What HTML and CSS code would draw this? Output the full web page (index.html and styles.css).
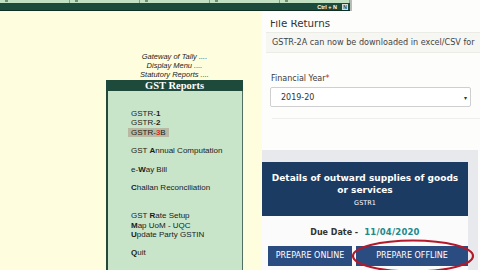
FILE: index.html
```html
<!DOCTYPE html>
<html>
<head>
<meta charset="utf-8">
<link rel="stylesheet" href="styles.css">
</head>
<body>
<div class="screen">
  <div class="tally">
    <div class="menu-col">
      <div class="crumbs">
        <div>Gateway of Tally ....</div>
        <div>Display Menu ....</div>
        <div>Statutory Reports ....</div>
      </div>
      <div class="gst-box">
        <div class="gst-head">GST Reports</div>
        <div class="gst-items">
          <div>GSTR-<b>1</b></div>
          <div>GSTR-<b>2</b></div>
          <div><span class="sel">GSTR-<span class="hot">3</span>B</span></div>
          <div class="gap"></div>
          <div>GST <b>A</b>nnual Computation</div>
          <div class="gap"></div>
          <div>e-<b>W</b>ay Bill</div>
          <div class="gap"></div>
          <div><b>C</b>hallan Reconciliation</div>
          <div class="gap"></div>
          <div class="gap"></div>
          <div>GST <b>R</b>ate Setup</div>
          <div><b>M</b>ap UoM - UQC</div>
          <div><b>U</b>pdate Party GSTIN</div>
          <div class="gap"></div>
          <div><b>Q</b>uit</div>
        </div>
      </div>
    </div>
  </div>

  <div class="portal">
    <div class="view">
      <h1 class="title">File Returns</h1>
      <div class="notice">GSTR-2A can now be downloaded in excel/CSV for</div>
      <div class="label">Financial Year<span class="req">*</span></div>
      <div class="select"><span>2019-20</span><span class="caret">&#9662;</span></div>
      <div class="rule"></div>
      <div class="tiles">
        <div class="card">
          <div class="card-head">
            <div class="card-title">Details of outward supplies of goods<br>or services</div>
            <div class="card-code">GSTR1</div>
          </div>
          <div class="card-body">
            <div class="due"><span class="due-l">Due Date -</span><span class="due-d">11/04/2020</span></div>
            <div class="btns">
              <div class="btn on">PREPARE ONLINE</div>
              <div class="btn off">PREPARE OFFLINE</div>
            </div>
          </div>
        </div>
      </div>
    </div>
  </div>

  <div class="tally-top">
    <div class="tabs">
      <div class="tab"><i></i></div>
      <div class="tab"><i></i></div>
      <div class="tab"><i></i></div>
      <div class="tab"><i></i></div>
      <div class="tab"><i></i></div>
    </div>
    <div class="bar"><span class="ctrl">Ctrl + N</span><span class="xbox">N</span></div>
  </div>

  <svg class="ring" width="130" height="40" viewBox="0 0 130 40">
    <ellipse cx="64" cy="22" rx="60" ry="15.5" fill="none" stroke="#b3192b" stroke-width="2.2"/>
  </svg>
</div>
</body>
</html>
```

FILE: styles.css
```css
* { box-sizing: border-box; margin: 0; padding: 0; }
html, body { width: 480px; height: 270px; overflow: hidden; background: #fff; }

.screen {
  position: relative;
  width: 480px;
  height: 270px;
  display: flex;
  overflow: hidden;
}

/* ---------- Tally ---------- */
.tally {
  width: 262px;
  height: 270px;
  background: #fefedf;
  padding-left: 106px;
  display: flex;
}
.menu-col {
  width: 137px;
  display: flex;
  flex-direction: column;
  padding-top: 52px;
}
.crumbs {
  font-family: "Liberation Sans", Arial, sans-serif;
  font-style: italic;
  font-size: 7.5px;
  line-height: 9.2px;
  color: #222;
  text-align: center;
}
.gst-box {
  flex: 1;
  background: #c9e5c9;
  border-left: 2px solid #24483a;
  border-right: 1px solid #51705f;
}
.gst-head {
  height: 11px;
  background: #1d4a3b;
  color: #fff;
  font-family: "Liberation Serif", "Times New Roman", serif;
  font-weight: bold;
  font-size: 10.5px;
  line-height: 11px;
  text-align: center;
  margin-left: -2px;
  margin-right: -1px;
}
.gst-items {
  padding: 18.4px 0 0 23px;
  font-family: "Liberation Sans", Arial, sans-serif;
  font-size: 8px;
  line-height: 9.3px;
  color: #1a1a1a;
}
.gst-items .gap { height: 9.3px; }
.gst-items b { font-weight: bold; }
.sel {
  display: inline-block;
  background: #b8b9a2;
  padding: 0 3px;
  margin-left: -3px;
}
.hot { color: #d3302a; font-weight: bold; }

/* ---------- Tally top bar ---------- */
.tally-top {
  position: absolute;
  left: 0;
  top: 0;
  width: 352px;
  height: 11px;
  border-right: 2px solid #b9bdb9;
}
.tabs {
  display: flex;
  height: 3px;
  background: #c2e0c2;
}
.tab {
  width: 70px;
  border-right: 1px solid #7f9f86;
  position: relative;
}
.tab i {
  position: absolute;
  left: 5px;
  top: 0;
  width: 3px;
  height: 2px;
  background: #6f8f77;
}
.bar {
  height: 8px;
  background: #1c4a3b;
  border-bottom: 1px solid #0f2f24;
  display: flex;
  justify-content: flex-end;
  align-items: center;
  padding-right: 2px;
  gap: 5px;
}
.ctrl {
  font-family: "Liberation Sans", Arial, sans-serif;
  font-weight: bold;
  font-size: 5.5px;
  line-height: 6px;
  color: #fff;
}
.xbox {
  width: 6px;
  height: 6px;
  background: #d8ddd8;
  color: #1c4a3b;
  font-family: "Liberation Sans", Arial, sans-serif;
  font-weight: bold;
  font-size: 5px;
  line-height: 6px;
  text-align: center;
}

/* ---------- Portal ---------- */
.portal {
  width: 218px;
  height: 270px;
  background: #fdfdfc;
  padding-top: 20px;
  font-family: "DejaVu Sans", Verdana, sans-serif;
}
.view {
  height: 250px;
  overflow: hidden;
}
.title {
  font-weight: normal;
  font-size: 10.3px;
  line-height: 12px;
  color: #333;
  margin: -3px 0 0 8px;
}
.notice {
  margin: 3px 0 0 4px;
  height: 21px;
  background: #f6f6f2;
  border-top: 1px solid #ecece6;
  border-bottom: 1px solid #ecece6;
  padding-left: 6px;
  font-size: 8.1px;
  line-height: 19px;
  color: #444;
  white-space: nowrap;
  overflow: hidden;
}
.label {
  margin: 21px 0 0 9px;
  font-size: 8px;
  line-height: 10px;
  color: #3a3a3a;
}
.req { color: #d0202a; }
.select {
  margin: 3px 0 0 8px;
  width: 201px;
  height: 20px;
  border: 1px solid #cfcfcf;
  border-radius: 2px;
  background: #fff;
  display: flex;
  justify-content: space-between;
  align-items: center;
  padding: 0 3px 0 10px;
  font-size: 8px;
  color: #333;
}
.caret { font-size: 6px; color: #333; }
.rule {
  margin: 11px 0 0 10px;
  height: 1px;
  background: #eeeeee;
}
.tiles {
  margin-top: 31px;
  width: 216px;
  height: 130px;
  background: #e7e9ec;
  padding-top: 12px;
}
.card {
  width: 206px;
  background: #fbfbfb;
  height: 120px;
}
.card-head {
  height: 54px;
  background: #1b3b63;
  color: #fff;
  text-align: center;
  padding-top: 10px;
}
.card-title {
  font-weight: bold;
  font-size: 9px;
  line-height: 12px;
}
.card-code {
  margin-top: 2px;
  font-size: 6.5px;
  line-height: 10px;
}
.card-body { padding-top: 10px; }
.due {
  display: flex;
  justify-content: center;
  align-items: baseline;
  gap: 6px;
  line-height: 12px;
  font-weight: bold;
}
.due-l { font-size: 8px; color: #333; }
.due-d { font-size: 8.5px; color: #23898a; letter-spacing: 0.2px; }
.btns {
  margin-top: 7px;
  padding-left: 6px;
  display: flex;
  gap: 4px;
}
.btn {
  height: 20px;
  background: #2b4c80;
  color: #fff;
  font-size: 8px;
  line-height: 20px;
  text-align: center;
}
.btn.on { width: 84px; }
.btn.off { flex: 1; }

.ring {
  position: absolute;
  left: 349px;
  top: 234px;
}
```
